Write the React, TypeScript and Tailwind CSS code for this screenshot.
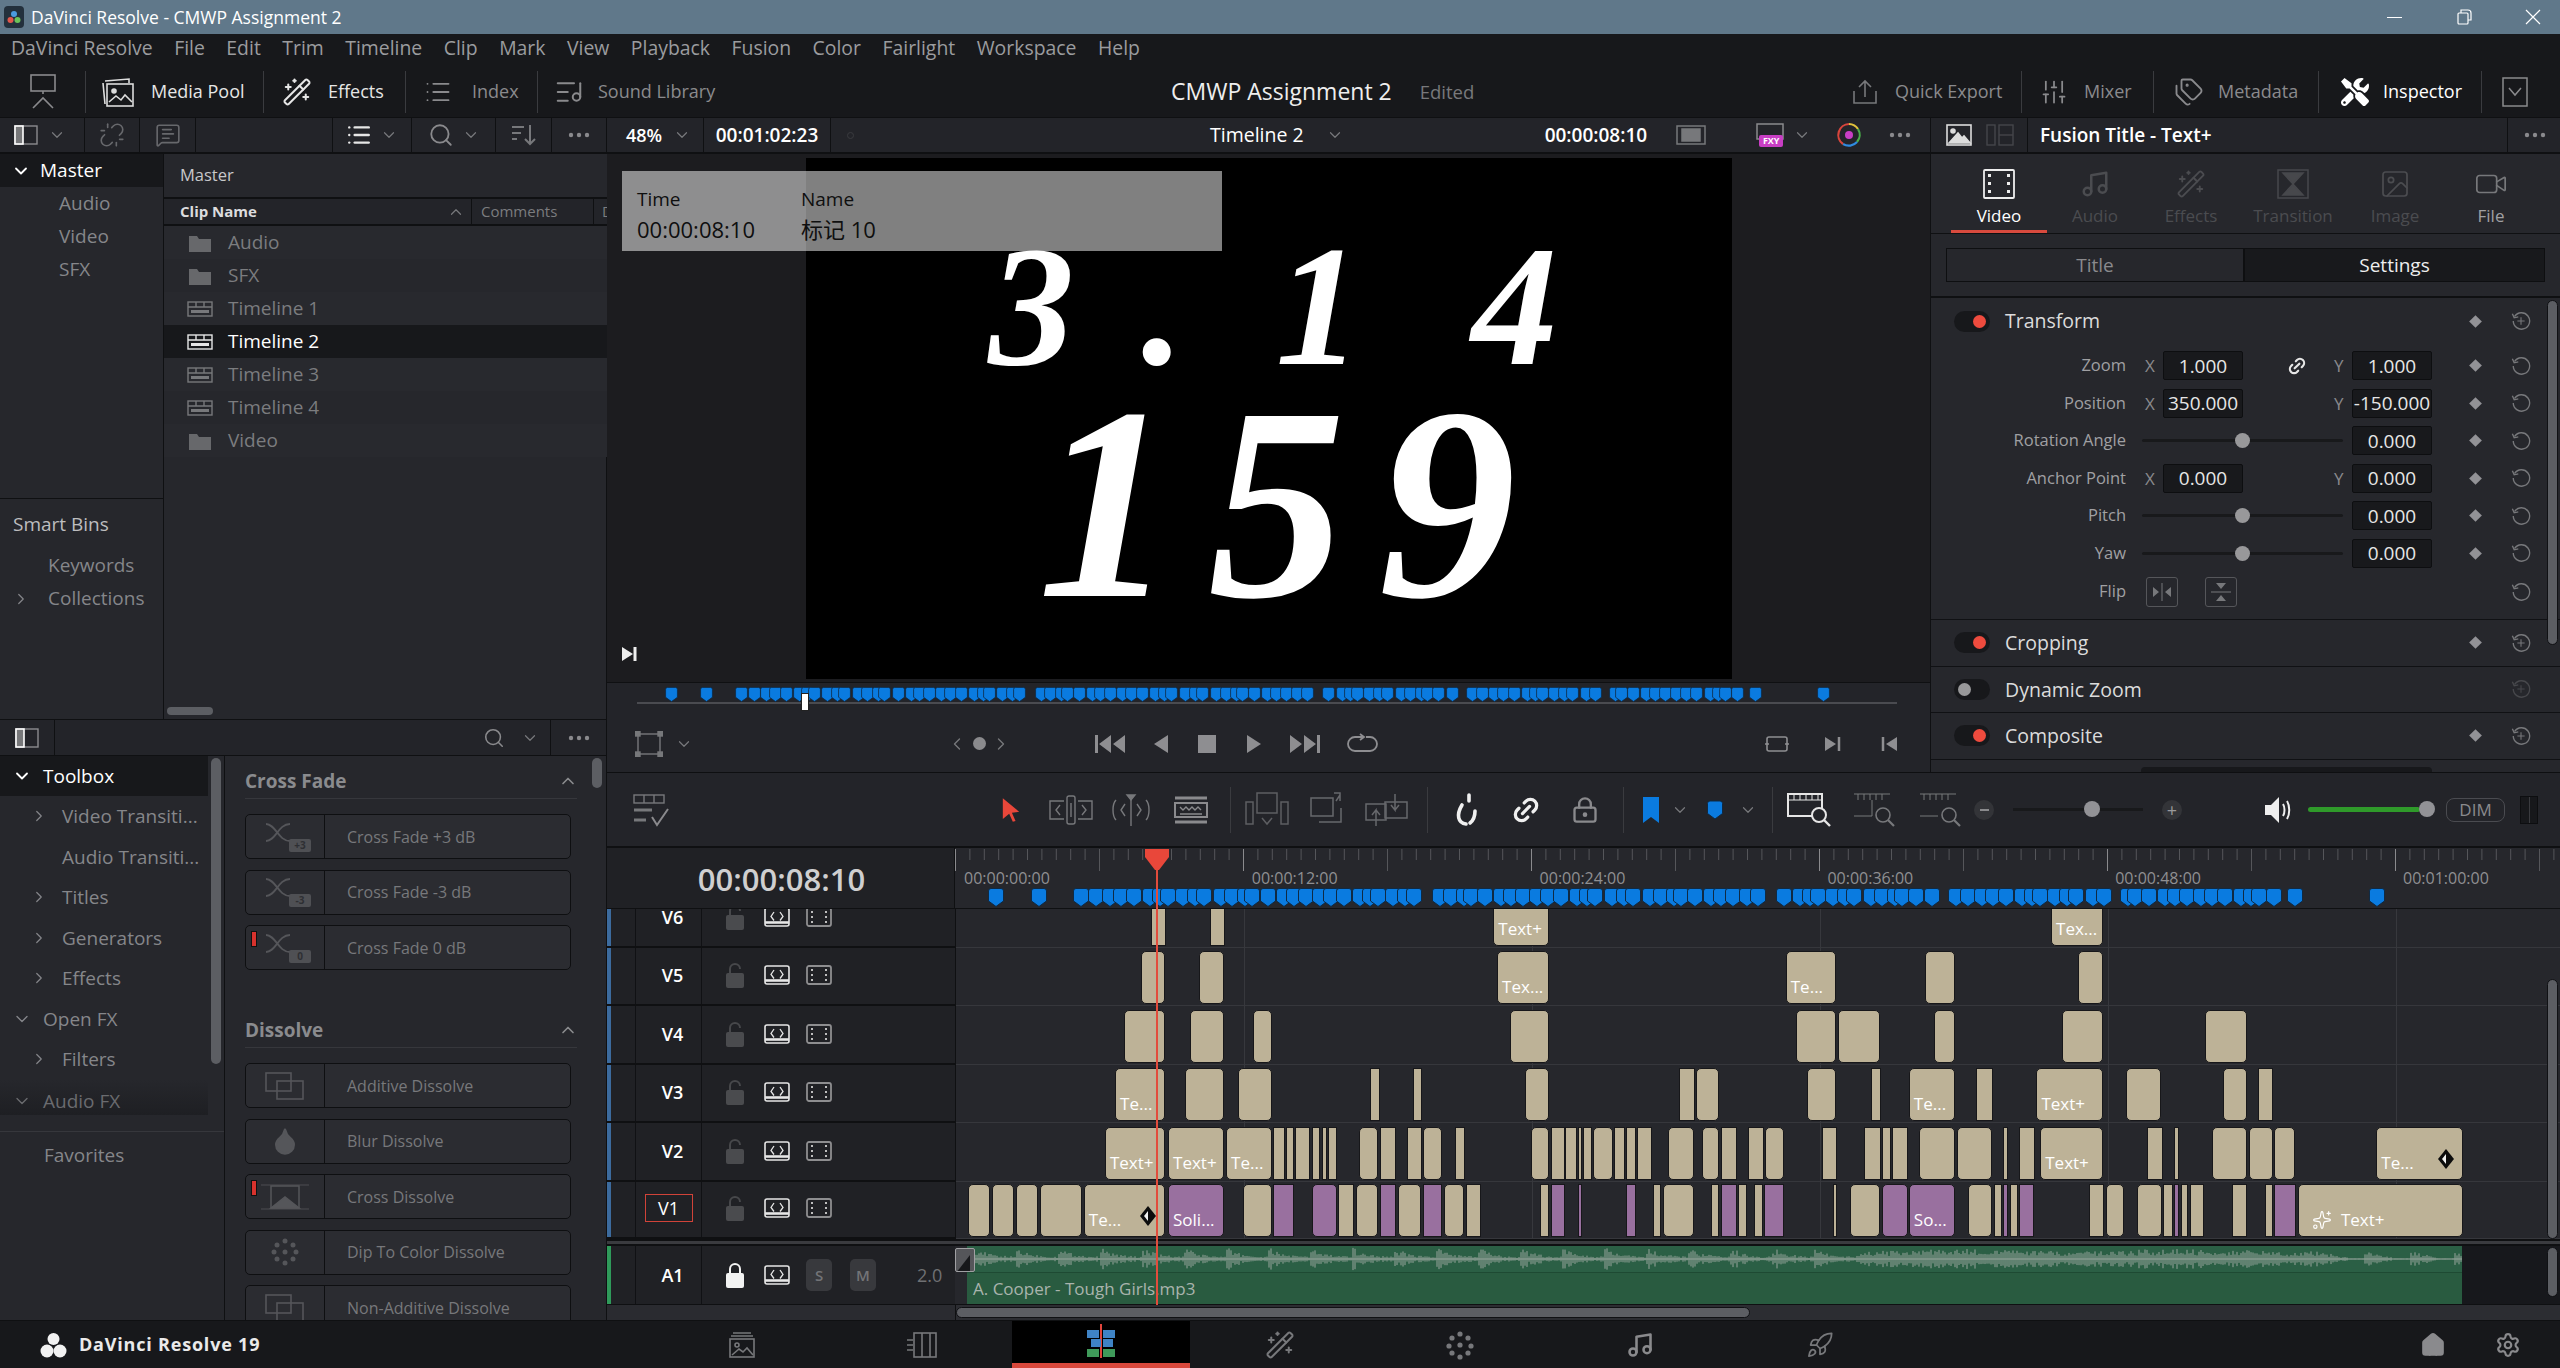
import React from 'react';
import { ChevronDown, ChevronRight, ChevronUp, ChevronLeft, Search, Unlink, MessageSquareText, List, ListMusic, WandSparkles, SlidersVertical, Tags, Music, Image as ImageIcon, Video, Link2, LockKeyhole, Home, Settings, Rocket, Sparkles, Droplet } from 'lucide-react';
import { FaTools } from 'react-icons/fa';

const Dots = ({ c = 'text-[#8a8a8d]' }: { c?: string }) => (
  <svg width="24" height="6" viewBox="0 0 24 6" className={c}><circle cx="4" cy="3" r="2.2" fill="currentColor" /><circle cx="12" cy="3" r="2.2" fill="currentColor" /><circle cx="20" cy="3" r="2.2" fill="currentColor" /></svg>
);
const Chev = ({ c = 'text-[#77787b]' }: { c?: string }) => <ChevronDown size={18} strokeWidth={1.6} className={c} />;

const PanelIcon = () => (
  <svg width="24" height="20" viewBox="0 0 24 20" fill="none"><rect x="1" y="1" width="22" height="18" stroke="#8c8c8f" strokeWidth="1.4" /><rect x="1" y="1" width="8" height="18" fill="#77787a" stroke="#fff" strokeWidth="1.6" /></svg>
);
const Presentation = () => (
  <svg width="28" height="38" viewBox="0 0 28 38" fill="none" stroke="#8a8a8d" strokeWidth="1.6"><rect x="2" y="2" width="24" height="16" /><path d="M14 18v3M4 35l10-10 10 10" /></svg>
);
const MediaPoolIcon = () => (
  <svg width="32" height="30" viewBox="0 0 32 30" fill="none" stroke="#ddd" strokeWidth="1.6"><path d="M1 6l2 21M3 4l24-2v4" /><rect x="5" y="7" width="26" height="22" /><circle cx="12" cy="14" r="2" fill="#ddd" /><path d="M7 25l7-6 5 4 4-5 7 7" /></svg>
);
const QuickExportIcon = () => (
  <svg width="30" height="26" viewBox="0 0 30 26" fill="none" stroke="#77787b" strokeWidth="1.6"><path d="M4 12v12h22V12M15 18V2M9 8l6-6 6 6" /></svg>
);
const BoxChev = () => (
  <svg width="26" height="30" viewBox="0 0 26 30" fill="none" stroke="#8a8a8d" strokeWidth="1.5"><rect x="1" y="1" width="24" height="28" /><path d="M7 11l6 7 6-7" /></svg>
);
const Sort = () => (
  <svg width="26" height="22" viewBox="0 0 26 22" fill="none" stroke="#77787b" strokeWidth="2"><path d="M1 3h12M1 9h9M1 15h5M19 1v19M14 15l5 5 5-5" /></svg>
);
const HeaderImg = () => (
  <svg width="26" height="22" viewBox="0 0 26 22" fill="none" stroke="#ddd" strokeWidth="1.6"><rect x="1" y="1" width="24" height="20" /><circle cx="7" cy="7" r="2" fill="#ddd" /><path d="M3 19l9-10 4 5 2-2 6 7z" fill="#ddd" /></svg>
);
const HeaderSplit = () => (
  <svg width="28" height="22" viewBox="0 0 28 22" fill="none" stroke="#45464a" strokeWidth="1.4"><rect x="1" y="1" width="8" height="20" /><rect x="13" y="1" width="14" height="20" /><path d="M13 11h14" /></svg>
);
const Hourglass = () => (
  <svg width="32" height="30" viewBox="0 0 32 30" fill="none" stroke="#47484c" strokeWidth="1.5"><rect x="1" y="1" width="30" height="28" /><path d="M6 4h20L16 15 6 4zM6 26h20L16 15 6 26z" fill="#47484c" /></svg>
);
const ResetPlus = ({ c = 'text-[#77787b]' }: { c?: string }) => (
  <svg width="22" height="22" viewBox="0 0 22 22" fill="none" stroke="currentColor" strokeWidth="1.5" className={c}><path d="M4 6a9 9 0 11-1.5 5M1.5 3l2 4.5 4.5-1" /><path d="M11 7v8M7 11h8" strokeWidth="1.2" /></svg>
);
const Reset = ({ c = 'text-[#77787b]' }: { c?: string }) => (
  <svg width="22" height="22" viewBox="0 0 22 22" fill="none" stroke="currentColor" strokeWidth="1.5" className={c}><path d="M4 6a9 9 0 11-1.5 5M1.5 3l2 4.5 4.5-1" /></svg>
);
const Diamond = () => <div className="w-[9px] h-[9px] rotate-45 bg-[#929296]" />;

const Tri = ({ d, w = 20, h = 20, c = '#8a8a8d' }: { d: string; w?: number; h?: number; c?: string }) => (
  <svg width={w} height={h} viewBox={`0 0 ${w} ${h}`}><path d={d} fill={c} /></svg>
);

const Marker = ({ w, h }: { w: number; h: number }) => (
  <svg width={w} height={h} viewBox="0 0 16 19"><path d="M3 .5h10a2.5 2.5 0 012.5 2.5v10L8 18.5.5 13V3A2.5 2.5 0 013 .5z" fill="#0a7be0" stroke="#0f2a44" strokeWidth="1" /></svg>
);

const pat = [14, 11, 13, 16, 10, 8, 15, 12, 9, 17, 11, 13, 7, 14, 16, 10, 12];
function timelineMarkers(): number[] {
  const out = [997, 1040, 1082];
  let start = 1097;
  let p = 0;
  while (start < 2230) {
    let x = start;
    while (x < start + 158) {
      out.push(x);
      x += pat[p % pat.length];
      p++;
    }
    start += 172;
  }
  out.push(2296, 2378);
  return out;
}
const tMarks = timelineMarkers();

// Clips: [start, end, kind, label]
type C = [number, number, string?, string?];
const a = (x: number) => 610 + x / 1.568;
const b = (x: number) => 1560 + x / 1.568;
const mk = (f: (x: number) => number, l: C[]): C[] => l.map(([s, e, k, t]) => [f(s), f(e), k, t]);

const tracks: { name: string; h: number; clips: C[] }[] = [
  { name: 'V6', h: 39, clips: [...mk(a, [[848, 872], [941, 965], [1385, 1473, 't', 'Text+']]), ...mk(b, [[770, 852, 't', 'Tex...']])] },
  { name: 'V5', h: 58, clips: [...mk(a, [[832, 871], [924, 963], [1391, 1473, 't', 'Tex...']]), ...mk(b, [[354, 433, 't', 'Te...'], [573, 619], [813, 851]])] },
  { name: 'V4', h: 59, clips: [...mk(a, [[806, 871], [909, 963], [1009, 1038], [1411, 1473]]), ...mk(b, [[370, 433], [436, 501], [587, 619], [787, 851], [1012, 1077]])] },
  { name: 'V3', h: 58, clips: [...mk(a, [[792, 871, 't', 'Te...'], [901, 963], [985, 1038], [1191, 1207], [1259, 1273], [1434, 1473]]), ...mk(b, [[186, 211], [213, 249], [387, 433], [487, 503], [547, 619, 't', 'Te...'], [653, 679], [747, 851, 't', 'Text+'], [887, 943], [1039, 1078], [1095, 1118]])] },
  { name: 'V2', h: 59, clips: [...mk(a, [[776, 871, 't', 'Text+'], [875, 963, 't', 'Text+'], [966, 1038, 't', 'Te...'], [1040, 1058], [1060, 1072], [1074, 1098], [1100, 1114], [1116, 1124], [1126, 1140], [1175, 1205], [1208, 1232], [1249, 1273], [1275, 1304], [1325, 1340], [1444, 1473], [1475, 1498]]), ...mk(b, [[8, 26], [28, 34], [36, 50], [52, 83], [85, 102], [104, 119], [121, 145], [170, 210], [222, 250], [252, 277], [294, 320], [322, 351], [411, 435], [477, 503], [505, 519], [520, 545], [563, 619], [622, 678], [694, 703], [719, 745], [753, 851, 't', 'Text+'], [921, 945], [962, 971], [1022, 1078], [1081, 1118], [1120, 1152], [1280, 1416, 'd', 'Te...']])] },
  { name: 'V1', h: 57, clips: [...mk(a, [[562, 596], [599, 633], [637, 671], [675, 740], [743, 871, 'd', 'Te...'], [875, 963, 'pr', 'Soli...'], [992, 1038], [1040, 1072, 'p'], [1101, 1140, 'pr'], [1142, 1166], [1169, 1205], [1208, 1232, 'p'], [1235, 1271], [1274, 1305, 'p'], [1308, 1339], [1342, 1366], [1459, 1473], [1475, 1498, 'p']]), ...mk(b, [[28, 34, 'p'], [104, 119, 'p'], [146, 159], [161, 210], [236, 250], [252, 277, 'p'], [279, 293], [304, 318], [320, 351, 'p'], [428, 434], [455, 501], [505, 545, 'pr'], [547, 619, 'pr', 'So...'], [639, 678], [681, 693], [695, 703, 'p'], [705, 718], [720, 744, 'p'], [829, 853], [856, 884], [905, 944], [946, 961], [963, 971, 'p'], [973, 985], [988, 1010], [1054, 1078], [1106, 1118], [1120, 1154, 'p'], [1157, 1416, 's', 'Text+']])] },
];

const LANE_X = 956;

const ClipDiamond = () => (
  <svg width="18" height="22" viewBox="0 0 18 22"><path d="M9 1l8 10-8 10-8-10z" fill="#0c0c0c" /><path d="M9 6l-4 5 4 5z" fill="#f2f2f2" /></svg>
);

const Clip = ({ c }: { c: C }) => {
  const [s, e, k, t] = c;
  const w = e - s;
  const purple = k === 'p' || k === 'pr';
  const rounded = k === 'p' ? false : k === 'pr' ? true : w > 17;
  return (
    <div
      className={`absolute top-[3px] bottom-[2px] border border-[#17171a] flex items-end overflow-hidden ${purple ? 'bg-[#99709f]' : 'bg-[#bdb297]'} ${rounded ? 'rounded-[5px]' : ''}`}
      style={{ left: s - LANE_X, width: w }}
    >
      {t && (
        <div className="flex items-center h-[22px] mb-[5px] pl-[4px] w-full text-white text-[17px] whitespace-nowrap">
          {k === 's' && <Sparkles size={20} strokeWidth={1.4} className="ml-[9px] mr-[9px]" />}
          <span>{t}</span>
          {k === 'd' && <span className="ml-auto mr-[7px] -mt-[8px]"><ClipDiamond /></span>}
        </div>
      )}
    </div>
  );
};

const Auto = () => (
  <svg width="26" height="20" viewBox="0 0 26 20" fill="none" stroke="#e6e6e6" strokeWidth="1.6"><rect x="1" y="1" width="24" height="18" rx="2" /><path d="M1 15.5h24" strokeWidth="2.6" /><path d="M10 5l-3 4.5 3 4M16 5l3 4.5-3 4" strokeWidth="1.3" /></svg>
);
const FilmMini = () => (
  <svg width="26" height="20" viewBox="0 0 26 20" fill="none"><rect x="1" y="1" width="24" height="18" rx="2" stroke="#8e8e90" strokeWidth="1.8" /><g fill="#bdbdbd"><rect x="5" y="4" width="2" height="2" /><rect x="5" y="9" width="2" height="2" /><rect x="5" y="14" width="2" height="2" /><rect x="19" y="4" width="2" height="2" /><rect x="19" y="9" width="2" height="2" /><rect x="19" y="14" width="2" height="2" /></g></svg>
);
const LockOpen = () => (
  <svg width="18" height="26" viewBox="0 0 18 26" fill="none"><path d="M4 11V7a5 5 0 0110 0" stroke="#47484b" strokeWidth="2" /><rect x="0" y="11" width="18" height="15" rx="2" fill="#4a4b4e" /></svg>
);

const TrackHead = ({ name, h }: { name: string; h: number }) => (
  <div className="w-[348px] shrink-0 bg-[#202125] flex items-end overflow-hidden border-b-2 border-[#0f1012]" style={{ height: h }}>
    <div className="h-[58px] shrink-0 w-full flex items-center">
      <div className="w-[4px] h-full bg-[#3c6b9e] shrink-0" />
      <div className="w-[25px] h-full border-r border-[#101114] shrink-0" />
      <div className="w-[66px] h-full border-r border-[#101114] flex items-center justify-center shrink-0">
        {name === 'V1' ? (
          <div className="w-[48px] h-[28px] border border-[#d14339] flex items-center justify-center text-white text-[18px] font-medium">V1</div>
        ) : (
          <span className="text-white text-[18px] font-semibold ml-[8px]">{name}</span>
        )}
      </div>
      <div className="ml-[24px] w-[18px]"><LockOpen /></div>
      <div className="ml-[20px]"><Auto /></div>
      <div className="ml-[16px]"><FilmMini /></div>
    </div>
  </div>
);

function rnd(i: number): number {
  const v = Math.sin(i * 12.9898) * 43758.5453;
  return v - Math.floor(v);
}
function wavePath(): string {
  let d = 'M0 13H1487';
  const W = 1487;
  for (let i = 0; i < W; i += 2) {
    const x = i;
    let env: number;
    if (x > 1345) {
      const m = (x - 1345) % 45;
      env = m < 28 ? 7 * (1 - m / 30) + 1 : 0.5;
    } else if (x > 880) {
      env = 7 + 3 * Math.abs(Math.sin(x / 70));
    } else {
      const beat = (x % 42) / 42;
      env = 2 + 10 * Math.exp(-beat * 3);
    }
    const v = Math.min(12, env * (0.35 + 0.65 * rnd(i)));
    d += `M${x} ${13 - v}V${13 + v}`;
  }
  return d;
}
const wave = wavePath();

const Ruler = () => {
  const ticks: React.ReactElement[] = [];
  for (let i = 0; i < 112; i++) {
    const x = 0.5 + i * 14.4;
    const maj = i % 20 === 0;
    const mid = i % 10 === 0;
    ticks.push(<path key={i} d={`M${x} 1V${maj || mid ? 23 : 12}`} stroke={maj ? '#8a8a8d' : '#55565a'} strokeWidth="1" />);
  }
  const labels = ['00:00:00:00', '00:00:12:00', '00:00:24:00', '00:00:36:00', '00:00:48:00', '00:01:00:00'];
  return (
    <div className="relative flex-1 h-full bg-[#26272c] overflow-hidden">
      <svg width="1604" height="24" className="absolute left-0 top-0">{ticks}</svg>
      {labels.map((l, i) => (
        <span key={l} className="absolute top-[20px] text-[16px] leading-[20px] text-[#8f8f92]" style={{ left: 9 + i * 287.8 }}>{l}</span>
      ))}
      {tMarks.map((x, i) => (
        <span key={i} className="absolute top-[40px] leading-[0]" style={{ left: x - LANE_X - 8 }}><Marker w={16} h={19} /></span>
      ))}
    </div>
  );
};

const GridLines = () => (
  <>
    {[288, 576, 864, 1152, 1440].map((x) => (
      <div key={x} className="absolute top-0 bottom-0 w-px bg-[#37383d]" style={{ left: x }} />
    ))}
  </>
);

const Timeline = () => (
  <div className="relative h-[549px] flex flex-col bg-[#26272c] border-t border-[#0e0f11]">
    {/* toolbar */}
    <div className="h-[75px] flex items-center bg-[#232429] border-b-2 border-[#0f1012] text-[#77787b]">
      <div className="w-[44px] ml-[22px] flex justify-center">
        <svg width="38" height="34" viewBox="0 0 38 34" fill="none" stroke="#77787b" strokeWidth="1.4"><rect x="2" y="2" width="30" height="8" /><path d="M12 2v8M22 2v8" /><path d="M2 17h18M2 27h12" strokeWidth="3" /><path d="M20 24l5 8 11-16" strokeWidth="2" stroke="#8a8a8d" /></svg>
      </div>
      <div className="w-[321px] shrink-0" />
      <div className="w-[34px] flex justify-center">
        <svg width="20" height="26" viewBox="0 0 22 28"><path d="M2 1l18 15-8 1 4 9-3 1-4-9-7 6z" fill="#e9473a" /></svg>
      </div>
      <div className="w-[60px] ml-[13px] flex justify-center">
        <svg width="44" height="30" viewBox="0 0 44 30" fill="none" stroke="#77787b" strokeWidth="1.4"><path d="M15 6H1v18h14M29 6h14v18H29" /><rect x="18" y="1" width="8" height="28" rx="2" /><path d="M22 8v14M11 10l-4 5 4 5M33 10l4 5-4 5" /></svg>
      </div>
      <div className="w-[60px] flex justify-center">
        <svg width="42" height="32" viewBox="0 0 42 32" fill="none" stroke="#77787b" strokeWidth="1.4"><path d="M21 3v29M6 6C2 10 2 22 6 26M36 6c4 4 4 16 0 20M15 10l-4 6 4 6M27 10l4 6-4 6" /><path d="M17 1h8l-4 5z" fill="#77787b" /></svg>
      </div>
      <div className="w-[60px] flex justify-center">
        <svg width="36" height="28" viewBox="0 0 36 28" fill="none" stroke="#8a8a8d" strokeWidth="2"><path d="M2 2h32M2 26h32" strokeWidth="3" /><rect x="2" y="7" width="32" height="14" /><path d="M7 11l3 3 3-3 3 3 3-3 3 3 3-3 3 3M7 18h22" strokeWidth="1.4" /></svg>
      </div>
      <div className="w-px h-[46px] bg-[#3a3b3f] ml-[9px]" />
      <div className="w-[60px] ml-[6px] flex justify-center">
        <svg width="44" height="36" viewBox="0 0 44 36" fill="none" stroke="#5d5e62" strokeWidth="1.5"><rect x="12" y="1" width="20" height="20" /><rect x="1" y="10" width="7" height="22" /><rect x="36" y="10" width="7" height="22" /><path d="M17 26l5 6 5-6" /></svg>
      </div>
      <div className="w-[60px] flex justify-center">
        <svg width="36" height="36" viewBox="0 0 36 36" fill="none" stroke="#67686c" strokeWidth="1.5"><rect x="2" y="6" width="22" height="18" /><path d="M10 30h22V16M25 1l6 0 0 8M31 3l-4 6" /></svg>
      </div>
      <div className="w-[60px] flex justify-center">
        <svg width="44" height="36" viewBox="0 0 44 36" fill="none" stroke="#67686c" strokeWidth="1.5"><rect x="1" y="12" width="20" height="16" /><rect x="20" y="10" width="22" height="16" /><path d="M11 34V18l-4 5M11 18l4 5M30 2v16l-4-5M30 18l4-5" /></svg>
      </div>
      <div className="w-px h-[46px] bg-[#3a3b3f] ml-[10px]" />
      <div className="w-[59px] ml-[9px] flex justify-center">
        <svg width="26" height="34" viewBox="0 0 26 34" fill="none" stroke="#f0f0f0" strokeWidth="3.6" strokeLinecap="round"><path d="M15 2v6M8 12C2 22 4 30 12 31M21 18c0 5-1 9-5 12" /></svg>
      </div>
      <div className="w-[59px] flex justify-center"><Link2 size={30} strokeWidth={2.6} className="text-[#f0f0f0] -rotate-45" /></div>
      <div className="w-[59px] flex justify-center"><LockKeyhole size={28} strokeWidth={2} className="text-[#8a8a8d]" /></div>
      <div className="w-px h-[46px] bg-[#3a3b3f] ml-[9px]" />
      <div className="w-[27px] ml-[13px] flex justify-center">
        <svg width="18" height="28" viewBox="0 0 18 28"><path d="M1 1h16v26l-8-6-8 6z" fill="#0a7be0" /></svg>
      </div>
      <div className="w-[31px] flex justify-center"><Chev /></div>
      <div className="w-[36px] ml-[2px] flex justify-center"><Marker w={16} h={26} /></div>
      <div className="w-[30px] flex justify-center"><Chev /></div>
      <div className="w-px h-[46px] bg-[#3a3b3f] ml-[9px]" />
      <div className="w-[60px] ml-[6px] flex justify-center">
        <svg width="46" height="36" viewBox="0 0 46 36" fill="none" stroke="#e6e6e6" strokeWidth="2"><rect x="2" y="2" width="34" height="22" /><path d="M2 8h34M8 3v5M14 3v5M20 3v5M26 3v5M32 3v5" strokeWidth="1" /><circle cx="33" cy="23" r="7" fill="#232429" /><path d="M38 28l6 6" strokeWidth="2.4" /></svg>
      </div>
      <div className="w-[66px] flex justify-center pl-[6px]">
        <svg width="46" height="36" viewBox="0 0 46 36" fill="none" stroke="#77787b" strokeWidth="1.6"><path d="M2 2h36M6 2v6M12 2v6M18 2v6M24 2v6M30 2v6M20 8v16M2 24h18" strokeWidth="1" /><circle cx="31" cy="23" r="7" /><path d="M36 28l6 6" strokeWidth="2.2" /></svg>
      </div>
      <div className="w-[66px] flex justify-center pl-[6px]">
        <svg width="46" height="36" viewBox="0 0 46 36" fill="none" stroke="#77787b" strokeWidth="1.6"><path d="M2 2h36M6 2v6M12 2v6M18 2v6M24 2v6M30 2v6M2 24h18" strokeWidth="1" /><circle cx="31" cy="23" r="7" /><path d="M36 28l6 6" strokeWidth="2.2" /></svg>
      </div>
      <div className="w-[20px] h-[20px] ml-[3px] rounded-full bg-[#333438] flex items-center justify-center">
        <div className="w-[9px] h-[2px] bg-[#8a8a8d]" />
      </div>
      <div className="relative w-[130px] ml-[19px] h-[3px] bg-[#18191b]">
        <div className="absolute left-[71px] -top-[7px] w-[16px] h-[16px] rounded-full bg-[#929296]" />
      </div>
      <div className="w-[20px] h-[20px] ml-[19px] rounded-full bg-[#333438] flex items-center justify-center text-[#9a9a9c] text-[18px] leading-none">+</div>
      <div className="ml-[82px]">
        <svg width="28" height="30" viewBox="0 0 28 30"><path d="M1 10h6l8-8v26l-8-8H1z" fill="#eee" /><path d="M19 9c2 3 2 9 0 12M23 6c3 5 3 13 0 18" stroke="#eee" strokeWidth="2" fill="none" /></svg>
      </div>
      <div className="relative w-[112px] ml-[16px] h-[5px] rounded bg-[#2f9a2a]">
        <div className="absolute -right-[15px] -top-[6px] w-[16px] h-[16px] rounded-full bg-[#929296]" />
      </div>
      <div className="ml-[26px] w-[59px] h-[24px] rounded-[8px] border border-[#4a4b50] flex items-center justify-center text-[#8a8a8d] text-[17px]">DIM</div>
      <div className="ml-[15px] w-[18px] h-[28px] border border-[#0d0e10] bg-[#17181b] flex justify-center"><div className="w-px bg-[#3a3b3f]" /></div>
    </div>
    {/* ruler */}
    <div className="h-[61px] flex border-b border-[#0f1012]">
      <div className="w-[348px] shrink-0 bg-[#202125] border-r border-[#0f1012] flex items-center justify-center pl-[2px]">
        <span className="text-[31px] font-semibold text-[#cfcfd0] pt-[3px]">00:00:08:10</span>
      </div>
      <Ruler />
    </div>
    {/* tracks */}
    {tracks.map((t) => (
      <div key={t.name} className="flex">
        <TrackHead name={t.name} h={t.h} />
        <div className="relative flex-1 border-l border-[#0f1012] overflow-hidden" style={{ height: t.h }}>
          <div className="absolute left-0 right-0 bottom-0 h-px bg-[#36373c]" />
          <GridLines />
          <div className="absolute left-0 right-0 bottom-0 h-[58px]">
            {t.clips.map((c, i) => <Clip key={i} c={c} />)}
          </div>
        </div>
      </div>
    ))}
    {/* divider */}
    <div className="h-[7px] bg-[#3a3b3f] border-y-2 border-[#0f1012]" />
    {/* audio */}
    <div className="flex h-[58px]">
      <div className="w-[348px] shrink-0 bg-[#202125] flex items-center">
        <div className="w-[4px] h-full bg-[#2f9a5a] shrink-0" />
        <div className="w-[25px] h-full border-r border-[#101114] shrink-0" />
        <div className="w-[66px] h-full border-r border-[#101114] flex items-center justify-center shrink-0">
          <span className="text-white text-[18px] font-semibold ml-[8px]">A1</span>
        </div>
        <div className="ml-[24px] w-[18px]"><svg width="18" height="26" viewBox="0 0 18 26" fill="none"><path d="M4 12V7a5 5 0 0110 0v5" stroke="#f2f2f2" strokeWidth="2" /><rect x="0" y="11" width="18" height="15" rx="2" fill="#f2f2f2" /></svg></div>
        <div className="ml-[20px]"><Auto /></div>
        <div className="ml-[16px] w-[26px] h-[32px] rounded-[5px] bg-[#38393d] flex items-center justify-center text-[#737477] text-[15px] font-semibold">S</div>
        <div className="ml-[18px] w-[26px] h-[32px] rounded-[5px] bg-[#38393d] flex items-center justify-center text-[#737477] text-[15px] font-semibold">M</div>
        <span className="ml-[41px] text-[#6f7073] text-[18px]">2.0</span>
      </div>
      <div className="relative flex-1 bg-[#26272c]">
        <div className="absolute left-[12px] w-[1495px] top-0 h-full flex flex-col overflow-hidden">
          <div className="h-[27px] bg-[#2b5f45] border-b border-[#1e4a33] relative overflow-hidden">
            <svg width="1487" height="26" className="absolute left-[8px] top-0"><path d={wave} stroke="#98a59d" strokeWidth="1" fill="none" /></svg>
          </div>
          <div className="flex-1 bg-[#295b40] flex items-center pl-[6px] text-[#a9b4ad] text-[17px]">A. Cooper - Tough Girls.mp3</div>
        </div>
        <div className="absolute left-0 top-[2px] w-[20px] h-[24px] bg-[#55565a] border border-[#a0a0a3] rounded-[2px] overflow-hidden">
          <svg width="20" height="24"><path d="M0 24L14 6v18z" fill="#17181b" /></svg>
        </div>
        <div className="absolute left-[1507px] right-0 top-0 bottom-0 bg-[#17181c]" />
      </div>
    </div>
    {/* scroll */}
    <div className="flex-1 flex bg-[#2c2d32] border-t border-[#0f1012]">
      <div className="w-[348px] shrink-0 bg-[#2a2b30]" />
      <div className="flex-1 border-l border-[#0f1012] py-[2px]">
        <div className="w-[794px] h-full bg-[#5c5e63] rounded-[6px] border border-[#101114]" />
      </div>
    </div>
    {/* vertical thumbs */}
    <div className="absolute right-[2px] top-[206px] w-[11px] h-[260px] rounded-[6px] bg-[#5c5e63] border border-[#101114]" />
    <div className="absolute right-[2px] top-[474px] w-[11px] h-[50px] rounded-[6px] bg-[#5c5e63] border border-[#101114]" />
    {/* playhead */}
    <div className="absolute left-[549px] top-[76px] w-[2px] h-[456px] bg-[#e24c3c]" />
    <svg width="24" height="21" viewBox="0 0 24 21" className="absolute left-[538px] top-[76px]"><path d="M0 0h24v8l-10 13h-4L0 8z" fill="#e9473a" /></svg>
  </div>
);

const Toggle = ({ on = true }: { on?: boolean }) => (
  <div className="w-[36px] h-[21px] rounded-full bg-[#17181b] relative shrink-0">
    <div className={`absolute top-[4px] w-[13px] h-[13px] rounded-full ${on ? 'right-[4px] bg-[#ee4b3e]' : 'left-[4px] bg-[#98989a]'}`} />
  </div>
);
const Num = ({ v }: { v: string }) => (
  <div className="w-[80px] h-[29px] bg-[#18191c] border border-[#0d0e10] rounded-[2px] flex items-center justify-center text-[19px] text-[#e6e6e6] shrink-0 whitespace-nowrap">{v}</div>
);
const Label = ({ t }: { t: string }) => <div className="w-[195px] text-right text-[16.5px] text-[#a0a0a3] shrink-0 whitespace-nowrap">{t}</div>;
const RowEnd = () => (
  <>
    <div className="ml-[33px] w-[20px] flex justify-center"><Diamond /></div>
    <div className="ml-[26px] w-[20px] flex justify-center"><Reset /></div>
  </>
);
const XYRow = ({ t, x, y, link }: { t: string; x: string; y: string; link?: boolean }) => (
  <div className="h-[37.5px] flex items-center">
    <Label t={t} />
    <div className="w-[37px] pl-[19px] text-[17px] text-[#8a8a8d]">X</div>
    <Num v={x} />
    <div className="ml-[44px] w-[20px] flex justify-center">{link && <Link2 size={20} strokeWidth={2.6} className="text-[#e6e6e6] -rotate-45" />}</div>
    <div className="w-[45px] pl-[27px] text-[17px] text-[#8a8a8d]">Y</div>
    <Num v={y} />
    <RowEnd />
  </div>
);
const SliderRow = ({ t }: { t: string }) => (
  <div className="h-[37.5px] flex items-center">
    <Label t={t} />
    <div className="relative ml-[16px] w-[201px] h-[3px] bg-[#18191b] rounded">
      <div className="absolute left-[93px] -top-[6px] w-[15px] h-[15px] rounded-full bg-[#98989a]" />
    </div>
    <div className="w-[9px]" />
    <Num v="0.000" />
    <RowEnd />
  </div>
);
const Section = ({ t, on = true, dim }: { t: string; on?: boolean; dim?: boolean }) => (
  <div className="h-[46.5px] flex items-center border-b border-[#101114] pl-[23px]">
    <Toggle on={on} />
    <span className="ml-[15px] text-[19.5px] text-[#dcdcdc] flex-1">{t}</span>
    {dim ? (
      <div className="ml-[26px] w-[20px] flex justify-center mr-[30px]"><ResetPlus c="text-[#47484c]" /></div>
    ) : (
      <>
        <div className="w-[20px] flex justify-center"><Diamond /></div>
        <div className="ml-[26px] w-[20px] flex justify-center mr-[30px]"><ResetPlus /></div>
      </>
    )}
  </div>
);

const TabCol = ({ icon, t, active, dim, wide }: { icon: React.ReactNode; t: string; active?: boolean; dim?: boolean; wide?: boolean }) => (
  <div className={`relative ${wide ? 'w-[108px]' : 'w-[96px]'} h-full flex flex-col items-center pt-[15px] ${dim ? 'text-[#4b4c50]' : active ? 'text-white' : 'text-[#a0a0a3]'}`}>
    <div className="h-[30px] flex items-center">{icon}</div>
    <span className="text-[17px] leading-[24px] mt-[5px]">{t}</span>
    {active && <div className="absolute bottom-0 left-0 right-0 h-[3px] bg-[#d84a3e]" />}
  </div>
);

const Inspector = () => (
  <div className="w-[631px] shrink-0 flex flex-col border-l border-[#0f1012] bg-[#26272c] h-full">
    <div className="h-[36px] flex items-center bg-[#232429] border-b-2 border-[#0f1012] shrink-0">
      <div className="w-[97px] h-full border-r border-[#0f1012] flex items-center pl-[15px] gap-[14px]"><HeaderImg /><HeaderSplit /></div>
      <div className="flex-1 pl-[12px] text-[19px] font-semibold text-white">Fusion Title - Text+</div>
      <div className="w-[54px] h-full border-l border-[#0f1012] flex items-center justify-center"><Dots /></div>
    </div>
    <div className="h-[80px] flex border-b border-[#0f1012] pl-[20px] shrink-0">
      <TabCol active t="Video" icon={<svg width="32" height="30" viewBox="0 0 32 30" fill="none"><rect x="1" y="1" width="30" height="28" rx="1" stroke="#eee" strokeWidth="1.8" /><g fill="#eee"><rect x="5" y="5" width="3" height="3" /><rect x="5" y="13" width="3" height="3" /><rect x="5" y="21" width="3" height="3" /><rect x="24" y="5" width="3" height="3" /><rect x="24" y="13" width="3" height="3" /><rect x="24" y="21" width="3" height="3" /></g></svg>} />
      <TabCol dim t="Audio" icon={<Music size={30} strokeWidth={2} />} />
      <TabCol dim t="Effects" icon={<WandSparkles size={30} strokeWidth={1.5} />} />
      <TabCol dim wide t="Transition" icon={<Hourglass />} />
      <TabCol dim t="Image" icon={<ImageIcon size={32} strokeWidth={1.3} />} />
      <TabCol t="File" icon={<Video size={34} strokeWidth={1.2} className="text-[#77787b]" />} />
    </div>
    <div className="h-[64px] px-[15px] py-[14px] flex border-b-2 border-[#0f1012] shrink-0">
      <div className="w-[298px] h-full bg-[#26272c] border border-[#0e0f11] flex items-center justify-center text-[19px] text-[#8a8a8d]">Title</div>
      <div className="w-[301px] h-full bg-[#18191c] border border-[#0e0f11] flex items-center justify-center text-[19px] text-[#eee]">Settings</div>
    </div>
    <div className="relative flex-1 overflow-hidden">
      <div className="h-[46px] flex items-center pl-[23px]">
        <Toggle />
        <span className="ml-[15px] text-[19.5px] text-[#dcdcdc] flex-1">Transform</span>
        <div className="w-[20px] flex justify-center"><Diamond /></div>
        <div className="ml-[26px] w-[20px] flex justify-center mr-[30px]"><ResetPlus /></div>
      </div>
      <div className="mt-[3px]">
        <XYRow t="Zoom" x="1.000" y="1.000" link />
        <XYRow t="Position" x="350.000" y="-150.000" />
        <SliderRow t="Rotation Angle" />
        <XYRow t="Anchor Point" x="0.000" y="0.000" />
        <SliderRow t="Pitch" />
        <SliderRow t="Yaw" />
        <div className="h-[48px] flex items-center border-b border-[#101114] pb-[8px]">
          <Label t="Flip" />
          <div className="ml-[20px] w-[32px] h-[30px] border border-[#55565a] rounded-[3px] flex items-center justify-center">
            <svg width="24" height="18" viewBox="0 0 24 18"><path d="M12 0v18" stroke="#77787b" /><path d="M3 4l6 5-6 5zM21 4l-6 5 6 5z" fill="#77787b" /></svg>
          </div>
          <div className="ml-[27px] w-[32px] h-[30px] border border-[#55565a] rounded-[3px] flex items-center justify-center">
            <svg width="24" height="24" viewBox="0 0 24 24"><path d="M2 12h20" stroke="#77787b" /><path d="M7 3h10l-5 6zM7 21h10l-5-6z" fill="#77787b" /></svg>
          </div>
          <div className="ml-[274px] w-[20px] flex justify-center"><Reset /></div>
        </div>
      </div>
      <Section t="Cropping" />
      <Section t="Dynamic Zoom" on={false} dim />
      <Section t="Composite" />
      <div className="absolute left-[210px] w-[291px] top-[469px] h-[8px] bg-[#17181b] rounded-t" />
      <div className="absolute right-[3px] top-[2px] w-[11px] h-[345px] rounded-[6px] bg-[#5c5e63] border border-[#101114]" />
    </div>
  </div>
);

const Viewer = () => (
  <div className="w-[1323px] shrink-0 flex flex-col h-full">
    <div className="h-[36px] flex items-center bg-[#232429] border-b-2 border-[#0f1012] text-white shrink-0">
      <div className="w-[97px] h-full border-r border-[#0f1012] flex items-center pl-[19px] gap-[11px] text-[18px] font-semibold">48%<Chev /></div>
      <div className="w-[127px] h-full border-r border-[#0f1012] flex items-center justify-center text-[19px] font-semibold whitespace-nowrap">00:01:02:23</div>
      <div className="w-[379px] pl-[16px]"><div className="w-[7px] h-[7px] rounded-full border border-[#3a3b3f]" /></div>
      <span className="text-[19.5px] font-medium">Timeline 2</span>
      <span className="ml-[22px]"><Chev /></span>
      <span className="ml-[201px] text-[19px] font-semibold">00:00:08:10</span>
      <div className="ml-[29px] w-[30px]">
        <svg width="30" height="20" viewBox="0 0 30 20" fill="none" stroke="#77787b" strokeWidth="1.5"><rect x="1" y="1" width="28" height="18" /><rect x="6" y="4" width="18" height="12" fill="#77787b" /></svg>
      </div>
      <div className="ml-[50px] relative w-[28px] h-[24px]">
        <svg width="28" height="24" viewBox="0 0 28 24" fill="none" stroke="#8a8a8d" strokeWidth="1.5"><rect x="1" y="1" width="26" height="15" /></svg>
        <div className="absolute left-[3px] bottom-0 w-[24px] h-[12px] bg-[#c83ec4] rounded-[2px] text-[9px] leading-[12px] font-bold text-white text-center">FXY</div>
      </div>
      <span className="ml-[9px]"><Chev /></span>
      <div className="ml-[24px]">
        <svg width="28" height="28" viewBox="0 0 28 28" fill="none" strokeWidth="2.2"><path d="M14 3a11 11 0 019 5" stroke="#e0c23c" /><path d="M23 8a11 11 0 01-1 13" stroke="#49b04a" /><path d="M22 21a11 11 0 01-14 2" stroke="#2f8be0" /><path d="M8 23A11 11 0 0114 3" stroke="#d8453c" /><circle cx="14" cy="14" r="4" fill="#c83ec4" stroke="none" /></svg>
      </div>
      <div className="ml-[25px]"><Dots /></div>
    </div>
    <div className="relative h-[529px] bg-[#1c1c1f] shrink-0 overflow-hidden border-b border-[#0f1012]">
      <div className="mx-auto w-[926px] h-[521px] mt-[4px] bg-black flex flex-col items-start overflow-hidden [font-family:'Liberation_Serif',serif] font-bold italic text-white leading-none whitespace-pre">
        <div className="text-[172px] h-[172px] leading-[172px] mt-[62px] ml-[183px] flex">
          <span>3</span>
          <span className="ml-[67px]">.</span>
          <span className="ml-[91px]">1</span>
          <span className="ml-[110px]">4</span>
        </div>
        <div className="text-[275px] h-[275px] leading-[275px] tracking-[33px] -mt-[26px] ml-[232px]">159</div>
      </div>
      <div className="absolute left-[15px] top-[17px] w-[600px] h-[80px] bg-white/50 text-[#0f0f0f] pt-[13px] pl-[15px] flex">
        <div className="w-[164px]"><div className="text-[19px] leading-[30px]">Time</div><div className="text-[22px] leading-[30px]">00:00:08:10</div></div>
        <div><div className="text-[19px] leading-[30px]">Name</div><div className="text-[22px] leading-[30px]">标记 10</div></div>
      </div>
      <svg width="18" height="18" viewBox="0 0 18 18" className="absolute left-[14px] top-[491px]"><path d="M1 2l11 7-11 7z" fill="#eee" /><path d="M14 2v14" stroke="#eee" strokeWidth="3" /></svg>
    </div>
    <div className="relative h-[34px] shrink-0 bg-[#232429]">
      <div className="absolute left-[30px] w-[1260px] top-[19px] h-[2px] bg-[#4a4b50]" />
      {tMarks.map((x, i) => (
        <span key={i} className="absolute top-[4px] leading-[0]" style={{ left: 672 + (x - 997) / 1.198 - 608 - 6.5 }}><Marker w={13} h={15} /></span>
      ))}
      <div className="absolute left-[194px] top-[10px] w-[8px] h-[18px] bg-white border border-[#222]" />
    </div>
    <div className="flex-1 flex items-center bg-[#232429] text-[#77787b] pb-[2px]">
      <div className="w-[30px] ml-[28px]">
        <svg width="28" height="26" viewBox="0 0 28 26" fill="none" stroke="#77787b" strokeWidth="1.4"><rect x="3" y="3" width="22" height="20" /><g fill="#77787b"><rect x="0" y="0" width="5" height="5" /><rect x="23" y="0" width="5" height="5" /><rect x="0" y="21" width="5" height="5" /><rect x="23" y="21" width="5" height="5" /></g></svg>
      </div>
      <span className="ml-[10px]"><Chev /></span>
      <ChevronLeft size={20} strokeWidth={1.6} className="ml-[254px]" />
      <div className="ml-[6px] w-[13px] h-[13px] rounded-full bg-[#8a8a8d]" />
      <ChevronRight size={20} strokeWidth={1.6} className="ml-[5px]" />
      <div className="ml-[84px] flex items-center">
        <div className="w-[32px]"><Tri w={32} h={20} d="M0 1h3v18H0zM16 1v18L4 10zM30 1v18L18 10z" c="#8e8e91" /></div>
        <div className="ml-[26px] w-[16px]"><Tri w={16} h={20} d="M15 1v18L1 10z" c="#8e8e91" /></div>
        <div className="ml-[29px] w-[18px] h-[18px] bg-[#8e8e91]" />
        <div className="ml-[30px] w-[16px]"><Tri w={16} h={20} d="M1 1v18l14-9z" c="#8e8e91" /></div>
        <div className="ml-[26px] w-[32px]"><Tri w={32} h={20} d="M2 1v18l12-9zM16 1v18l12-9zM29 1h3v18h-3z" c="#8e8e91" /></div>
        <div className="ml-[26px]">
          <svg width="32" height="22" viewBox="0 0 32 22" fill="none" stroke="#8e8e91" strokeWidth="1.8"><path d="M20 4h4a7 7 0 010 14H9A7 7 0 019 4h9M14 1l4 3-4 3" /></svg>
        </div>
      </div>
      <div className="ml-[386px] flex items-center">
        <svg width="26" height="22" viewBox="0 0 26 22" fill="none" stroke="#8e8e91" strokeWidth="1.6"><rect x="3" y="4" width="20" height="14" rx="2" /><path d="M1 11h4M21 11h4" /></svg>
        <svg width="18" height="18" viewBox="0 0 18 18" className="ml-[34px]"><path d="M1 2l11 7-11 7z" fill="#8e8e91" /><path d="M15 2v14" stroke="#8e8e91" strokeWidth="2.5" /></svg>
        <svg width="18" height="18" viewBox="0 0 18 18" className="ml-[38px]"><path d="M17 2L6 9l11 7z" fill="#8e8e91" /><path d="M3 2v14" stroke="#8e8e91" strokeWidth="2.5" /></svg>
      </div>
    </div>
  </div>
);

const bins = [
  ['folder', 'Audio'], ['folder', 'SFX'], ['tl', 'Timeline 1'], ['tl', 'Timeline 2'], ['tl', 'Timeline 3'], ['tl', 'Timeline 4'], ['folder', 'Video'],
];
const FolderIcon = () => (
  <svg width="24" height="20" viewBox="0 0 24 20"><path d="M1 3h8l2 3h12v13H1z" fill="#67686b" /></svg>
);
const TlIcon = ({ sel }: { sel?: boolean }) => (
  <svg width="26" height="16" viewBox="0 0 26 16" fill="none" stroke={sel ? '#e6e6e6' : '#77787b'} strokeWidth="1.4"><rect x="1" y="1" width="24" height="14" /><path d="M1 6h24M9 1v5M17 1v5" /><path d="M4 10.5h18" strokeWidth="3" /></svg>
);

const MediaPool = () => (
  <div className="h-[565px] flex shrink-0 bg-[#26272c]">
    <div className="w-[164px] shrink-0 border-r border-[#0f1012] flex flex-col text-[19px] text-[#85868a]">
      <div className="h-[33px] bg-[#17181b] flex items-center pl-[11px] text-white gap-[9px]"><ChevronDown size={20} strokeWidth={2.2} />Master</div>
      <div className="h-[33px] flex items-center pl-[59px]">Audio</div>
      <div className="h-[33px] flex items-center pl-[59px]">Video</div>
      <div className="h-[33px] flex items-center pl-[59px]">SFX</div>
      <div className="mt-[212px] border-t border-[#0f1012] h-[51px] flex items-center pl-[13px] text-[#bdbdbf]">Smart Bins</div>
      <div className="h-[33px] flex items-center pl-[48px]">Keywords</div>
      <div className="h-[33px] flex items-center pl-[12px] gap-[18px]"><ChevronRight size={18} strokeWidth={1.6} />Collections</div>
      <div className="flex-1" />
    </div>
    <div className="relative flex-1 flex flex-col">
      <div className="h-[45px] flex items-center pl-[16px] text-[16.5px] text-[#c8c8ca] border-b-2 border-[#0f1012] bg-[#26272c]">Master</div>
      <div className="h-[27px] flex items-center text-[15px] border-b-2 border-[#0f1012] bg-[#232429]">
        <div className="w-[307px] pl-[16px] font-bold text-[#dcdcde] flex items-center">Clip Name<ChevronUp size={18} strokeWidth={1.6} className="ml-auto mr-[6px] text-[#77787b]" /></div>
        <div className="w-[122px] h-full border-l border-[#0f1012] pl-[9px] flex items-center text-[#7b7c7f]">Comments</div>
        <div className="h-full flex-1 border-l border-[#0f1012] pl-[8px] flex items-center text-[#7b7c7f] overflow-hidden">D</div>
      </div>
      {bins.map(([k, t], i) => (
        <div key={t} className={`h-[33px] flex items-center text-[19px] ${t === 'Timeline 2' ? 'bg-[#17181b] text-white' : i % 2 === 0 ? 'bg-[#28292e] text-[#7b7c7f]' : 'bg-[#26272c] text-[#7b7c7f]'}`}>
          <div className="w-[64px] flex justify-center pl-[8px]">{k === 'folder' ? <FolderIcon /> : <TlIcon sel={t === 'Timeline 2'} />}</div>
          {t}
        </div>
      ))}
      <div className="absolute left-[3px] bottom-[4px] w-[46px] h-[8px] rounded-[4px] bg-[#5c5e63]" />
    </div>
  </div>
);

const FxBtn = ({ t, icon, fav }: { t: string; icon: React.ReactNode; fav?: boolean }) => (
  <div className="relative w-[326px] h-[45px] shrink-0 bg-[#2b2c31] border border-[#0e0f11] rounded-[5px] flex items-center text-[16px] text-[#77787b]">
    <div className="w-[79px] h-full flex items-center justify-center border-r border-[#0e0f11]">{icon}</div>
    <span className="ml-[22px] whitespace-nowrap">{t}</span>
    {fav && <div className="absolute left-[5px] top-[5px] w-[6px] h-[16px] bg-[#d8322d] border border-[#111]" />}
  </div>
);
const CrossIcon = ({ tag }: { tag: string }) => (
  <div className="relative w-[46px] h-[30px] ml-[6px]">
    <svg width="28" height="22" viewBox="0 0 28 22" fill="none" stroke="#55565a" strokeWidth="1.8"><path d="M1 2c10 0 12 17 24 17M1 19C11 19 13 2 25 2" /></svg>
    <span className="absolute right-0 bottom-0 w-[22px] h-[13px] bg-[#4f5054] rounded-[2px] text-[10px] leading-[13px] font-bold text-[#2e2f33] text-center">{tag}</span>
  </div>
);
const TwoSquares = () => (
  <svg width="40" height="28" viewBox="0 0 40 28" fill="none" stroke="#55565a" strokeWidth="1.6"><rect x="1" y="1" width="25" height="18" /><rect x="12" y="9" width="26" height="18" /></svg>
);
const EffectsHead = ({ t }: { t: string }) => (
  <div className="h-[33px] mx-[20px] w-[332px] flex items-center justify-between border-b border-[#36373c] text-[19px] font-bold text-[#8a8b8e] pb-[2px]">
    {t}<ChevronUp size={20} strokeWidth={2} className="mr-[-1px] text-[#8a8b8e]" />
  </div>
);

const Effects = () => (
  <div className="flex flex-col flex-1 min-h-0">
    <div className="h-[37px] flex items-center bg-[#232429] border-y border-[#0f1012] shrink-0">
      <div className="w-[55px] h-full border-r border-[#0f1012] flex items-center justify-center"><PanelIcon /></div>
      <div className="flex-1" />
      <Search size={22} strokeWidth={1.7} className="text-[#8a8a8d]" />
      <span className="ml-[16px]"><Chev /></span>
      <div className="w-[56px] ml-[11px] h-full border-l border-[#0f1012] flex items-center justify-center"><Dots /></div>
    </div>
    <div className="flex-1 flex min-h-0 bg-[#26272c]">
      <div className="relative w-[225px] shrink-0 border-r border-[#0f1012] text-[19px] text-[#85868a] overflow-hidden">
        <div className="w-[208px] h-[40px] bg-[#17181b] flex items-center pl-[12px] gap-[11px] text-white"><ChevronDown size={20} strokeWidth={2.2} />Toolbox</div>
        {[
          ['r', 'Video Transiti...'], ['n', 'Audio Transiti...'], ['r', 'Titles'], ['r', 'Generators'], ['r', 'Effects'],
        ].map(([k, t]) => (
          <div key={t} className="w-[208px] h-[40.5px] flex items-center pl-[30px] gap-[14px] whitespace-nowrap">
            {k === 'r' ? <ChevronRight size={18} strokeWidth={1.6} /> : <span className="w-[18px] shrink-0" />}{t}
          </div>
        ))}
        <div className="w-[208px] h-[40.5px] flex items-center pl-[12px] gap-[11px]"><ChevronDown size={20} strokeWidth={1.6} />Open FX</div>
        <div className="w-[208px] h-[40.5px] flex items-center pl-[30px] gap-[14px]"><ChevronRight size={18} strokeWidth={1.6} />Filters</div>
        <div className="w-[208px] h-[35px] pt-[8px] overflow-hidden flex items-start pl-[12px] gap-[11px] text-[#6a6b6f] bg-gradient-to-b from-[#26272c] to-[#1e1f23]"><ChevronDown size={20} strokeWidth={1.6} className="mt-[3px]" /><span className="leading-[26px]">Audio FX</span></div>
        <div className="mt-[16px] border-t border-[#36373c] h-[48px] flex items-center pl-[44px]">Favorites</div>
        <div className="absolute left-[211px] top-[2px] w-[10px] h-[306px] rounded-[5px] bg-[#5c5e63]" />
      </div>
      <div className="relative flex-1 overflow-hidden">
        <div className="pt-[10px]"><EffectsHead t="Cross Fade" /></div>
        <div className="flex flex-col gap-[10.5px] ml-[20px] mt-[15px]">
          <FxBtn t="Cross Fade +3 dB" icon={<CrossIcon tag="+3" />} />
          <FxBtn t="Cross Fade -3 dB" icon={<CrossIcon tag="-3" />} />
          <FxBtn t="Cross Fade 0 dB" fav icon={<CrossIcon tag="0" />} />
        </div>
        <div className="mt-[45px]"><EffectsHead t="Dissolve" /></div>
        <div className="flex flex-col gap-[10.5px] ml-[20px] mt-[15px]">
          <FxBtn t="Additive Dissolve" icon={<TwoSquares />} />
          <FxBtn t="Blur Dissolve" icon={<Droplet size={30} fill="#55565a" stroke="#55565a" />} />
          <FxBtn t="Cross Dissolve" fav icon={<svg width="48" height="28" viewBox="0 0 48 28" fill="none" stroke="#55565a" strokeWidth="1.5"><rect x="10" y="3" width="28" height="22" /><path d="M0 2h48M0 26h48" strokeWidth="0.8" /><path d="M10 25l14-11 14 11z" fill="#55565a" /></svg>} />
          <FxBtn t="Dip To Color Dissolve" icon={<svg width="30" height="30" viewBox="0 0 30 30" fill="#55565a"><circle cx="15" cy="4" r="2.5" /><circle cx="7" cy="8" r="2.5" /><circle cx="23" cy="8" r="2.5" /><circle cx="4" cy="15" r="2.5" /><circle cx="15" cy="15" r="2.5" /><circle cx="26" cy="15" r="2.5" /><circle cx="7" cy="22" r="2.5" /><circle cx="23" cy="22" r="2.5" /><circle cx="15" cy="26" r="2.5" /></svg>} />
          <FxBtn t="Non-Additive Dissolve" icon={<TwoSquares />} />
        </div>
        <div className="absolute left-[367px] top-[2px] w-[10px] h-[30px] rounded-[5px] bg-[#5c5e63]" />
      </div>
    </div>
  </div>
);

function MediaPoolIcon2() {
  return (
    <svg width="28" height="28" viewBox="0 0 28 28" fill="none" stroke="#77787b" strokeWidth="1.6"><path d="M5 2h18M3 5h22" /><rect x="2" y="8" width="24" height="18" /><circle cx="9" cy="14" r="2" /><path d="M4 24l7-6 4 3 4-4 6 7" /></svg>
  );
}

export default function App() {
  const menus = ['File', 'Edit', 'Trim', 'Timeline', 'Clip', 'Mark', 'View', 'Playback', 'Fusion', 'Color', 'Fairlight', 'Workspace', 'Help'];
  return (
    <div className="w-[2560px] h-[1368px] overflow-hidden flex flex-col bg-[#17181b] [font-family:'Open_Sans','Noto_Sans_CJK_SC',sans-serif]">
      {/* title bar */}
      <div className="h-[34px] shrink-0 bg-[#60788a] flex items-center text-white text-[17.5px]">
        <div className="ml-[4px] w-[20px] h-[22px] rounded-[4px] bg-[#23303c] flex items-center justify-center mr-[7px]">
          <svg width="14" height="14" viewBox="0 0 14 14"><circle cx="7" cy="4" r="3" fill="#4a9be0" /><circle cx="3.5" cy="10" r="3" fill="#e2574c" /><circle cx="10.5" cy="10" r="3" fill="#6cc35a" /></svg>
        </div>
        DaVinci Resolve - CMWP Assignment 2
        <div className="ml-auto flex items-center">
          <div className="w-[15px] h-px bg-white mr-[55px]" />
          <svg width="15" height="16" viewBox="0 0 15 16" fill="none" stroke="#fff" strokeWidth="1.2" className="mr-[53px]"><rect x="1" y="4" width="10" height="11" rx="1" /><path d="M4 4V1h7a3 3 0 013 3v7h-3" /></svg>
          <svg width="16" height="16" viewBox="0 0 16 16" stroke="#fff" strokeWidth="1.2" className="mr-[19px]"><path d="M1 1l14 14M15 1L1 15" /></svg>
        </div>
      </div>
      {/* menu */}
      <div className="h-[34px] shrink-0 flex items-center gap-[21.5px] pl-[11px] pb-[6px] text-[19.4px] text-[#9b9c9f]">
        <span>DaVinci Resolve</span>
        {menus.map((m) => <span key={m}>{m}</span>)}
      </div>
      {/* toolbar */}
      <div className="h-[49px] shrink-0 flex items-center text-[18px] pb-[2px]">
        <div className="w-[85px] flex justify-center"><Presentation /></div>
        <div className="w-px h-[42px] bg-[#3a3b3f]" />
        <div className="w-[177px] flex items-center pl-[16px] gap-[17px] text-[#e6e6e6]"><MediaPoolIcon />Media Pool</div>
        <div className="w-px h-[42px] bg-[#3a3b3f]" />
        <div className="w-[141px] flex items-center pl-[18px] gap-[16px] text-[#e6e6e6]"><WandSparkles size={30} strokeWidth={1.6} />Effects</div>
        <div className="w-px h-[42px] bg-[#3a3b3f]" />
        <div className="w-[131px] flex items-center pl-[18px] gap-[20px] text-[#8a8a8d]"><List size={28} strokeWidth={1.6} />Index</div>
        <div className="w-px h-[42px] bg-[#3a3b3f]" />
        <div className="w-[181px] flex items-center pl-[16px] gap-[14px] text-[#8a8a8d] whitespace-nowrap"><ListMusic size={30} strokeWidth={1.6} />Sound Library</div>
        <span className="ml-[452px] text-[23px] font-medium text-[#eee]">CMWP Assignment 2</span>
        <span className="ml-[28px] text-[18.5px] text-[#77787b]">Edited</span>
        <div className="ml-auto flex items-center text-[#8a8a8d]">
          <div className="w-[171px] flex items-center gap-[15px] whitespace-nowrap"><QuickExportIcon />Quick Export</div>
          <div className="w-px h-[42px] bg-[#3a3b3f]" />
          <div className="w-[131px] flex items-center pl-[18px] gap-[16px]"><SlidersVertical size={28} strokeWidth={1.5} />Mixer</div>
          <div className="w-px h-[42px] bg-[#3a3b3f]" />
          <div className="w-[164px] flex items-center pl-[20px] gap-[14px]"><Tags size={30} strokeWidth={1.5} />Metadata</div>
          <div className="w-px h-[42px] bg-[#3a3b3f]" />
          <div className="w-[162px] flex items-center pl-[22px] gap-[14px] text-white"><FaTools size={28} />Inspector</div>
          <div className="w-px h-[42px] bg-[#3a3b3f]" />
          <div className="w-[78px] flex justify-center pr-[12px]"><BoxChev /></div>
        </div>
      </div>
      {/* main */}
      <div className="h-[1203px] shrink-0 flex border-t border-[#0f1012]">
        <div className="w-[607px] shrink-0 flex flex-col border-r border-[#0f1012]">
          <div className="h-[36px] shrink-0 flex items-center bg-[#232429] border-b-2 border-[#0f1012]">
            <div className="w-[85px] h-full border-r border-[#0f1012] flex items-center pl-[14px] gap-[10px]"><PanelIcon /><Chev /></div>
            <div className="w-[55px] h-full border-r border-[#0f1012] flex items-center justify-center"><Unlink size={26} strokeWidth={1.5} className="text-[#67686c]" /></div>
            <div className="w-[56px] h-full border-r border-[#0f1012] flex items-center justify-center"><MessageSquareText size={26} strokeWidth={1.5} className="text-[#67686c]" /></div>
            <div className="w-[137px] h-full border-r border-[#0f1012]" />
            <div className="w-[79px] h-full border-r border-[#0f1012] flex items-center justify-center gap-[8px]"><List size={26} strokeWidth={2.2} className="text-[#e6e6e6]" /><Chev /></div>
            <div className="w-[84px] h-full border-r border-[#0f1012] flex items-center justify-center gap-[8px]"><Search size={26} strokeWidth={1.7} className="text-[#8a8a8d]" /><Chev /></div>
            <div className="w-[56px] h-full border-r border-[#0f1012] flex items-center justify-center"><Sort /></div>
            <div className="flex-1 h-full flex items-center justify-center"><Dots /></div>
          </div>
          <MediaPool />
          <Effects />
        </div>
        <div className="flex-1 flex flex-col min-w-0">
          <div className="h-[654px] shrink-0 flex overflow-hidden">
            <Viewer />
            <Inspector />
          </div>
          <Timeline />
        </div>
      </div>
      {/* bottom */}
      <div className="flex-1 flex items-center bg-[#17181b] border-t border-[#0f1012] text-[#77787b]">
        <div className="w-[652px] shrink-0 flex items-center pl-[40px] gap-[12px]">
          <svg width="27" height="26" viewBox="0 0 27 26" fill="#f2f2f2"><circle cx="13.5" cy="7" r="6" /><circle cx="7" cy="19" r="6.5" /><circle cx="20" cy="19" r="6.5" /></svg>
          <span className="text-[18px] font-bold text-[#eaeaea] tracking-[0.8px]">DaVinci Resolve 19</span>
        </div>
        <div className="w-[180px] flex justify-center"><MediaPoolIcon2 /></div>
        <div className="w-[180px] flex justify-center"><svg width="32" height="30" viewBox="0 0 32 30" fill="none" stroke="#77787b" strokeWidth="1.6"><rect x="8" y="3" width="22" height="24" /><path d="M1 10h6M1 15h6M1 20h6M16 3v24M24 3v24" /></svg></div>
        <div className="relative w-[178px] h-full bg-black flex justify-center items-center border-b-[5px] border-[#d8483c]">
          <svg width="36" height="36" viewBox="0 0 36 36"><path d="M18 0v34" stroke="#e2453c" strokeWidth="2" /><g fill="#3f83c5"><rect x="4" y="6" width="12" height="8" /><rect x="20" y="6" width="12" height="8" /><rect x="8" y="15" width="10" height="8" /><rect x="20" y="15" width="10" height="8" /></g><g fill="#3f9a5a"><rect x="4" y="25" width="12" height="8" /><rect x="20" y="25" width="12" height="8" /></g></svg>
        </div>
        <div className="w-[180px] flex justify-center"><WandSparkles size={30} strokeWidth={1.6} /></div>
        <div className="w-[180px] flex justify-center"><svg width="30" height="30" viewBox="0 0 30 30" fill="#77787b"><circle cx="15" cy="4" r="2.6" /><circle cx="7" cy="8" r="2.6" /><circle cx="23" cy="8" r="2.6" /><circle cx="4" cy="16" r="2.6" /><circle cx="15" cy="15" r="2.6" /><circle cx="26" cy="16" r="2.6" /><circle cx="7" cy="23" r="2.6" /><circle cx="23" cy="23" r="2.6" /><circle cx="15" cy="27" r="2.6" /></svg></div>
        <div className="w-[180px] flex justify-center"><Music size={28} strokeWidth={2.2} className="text-[#8a8a8d]" /></div>
        <div className="w-[180px] flex justify-center"><Rocket size={28} strokeWidth={1.5} /></div>
        <div className="ml-[503px] w-[40px] flex justify-center"><Home size={26} fill="#8a8a8d" className="text-[#8a8a8d]" /></div>
        <div className="ml-[35px] w-[40px] flex justify-center"><Settings size={26} strokeWidth={2} className="text-[#8a8a8d]" /></div>
      </div>
    </div>
  );
}
